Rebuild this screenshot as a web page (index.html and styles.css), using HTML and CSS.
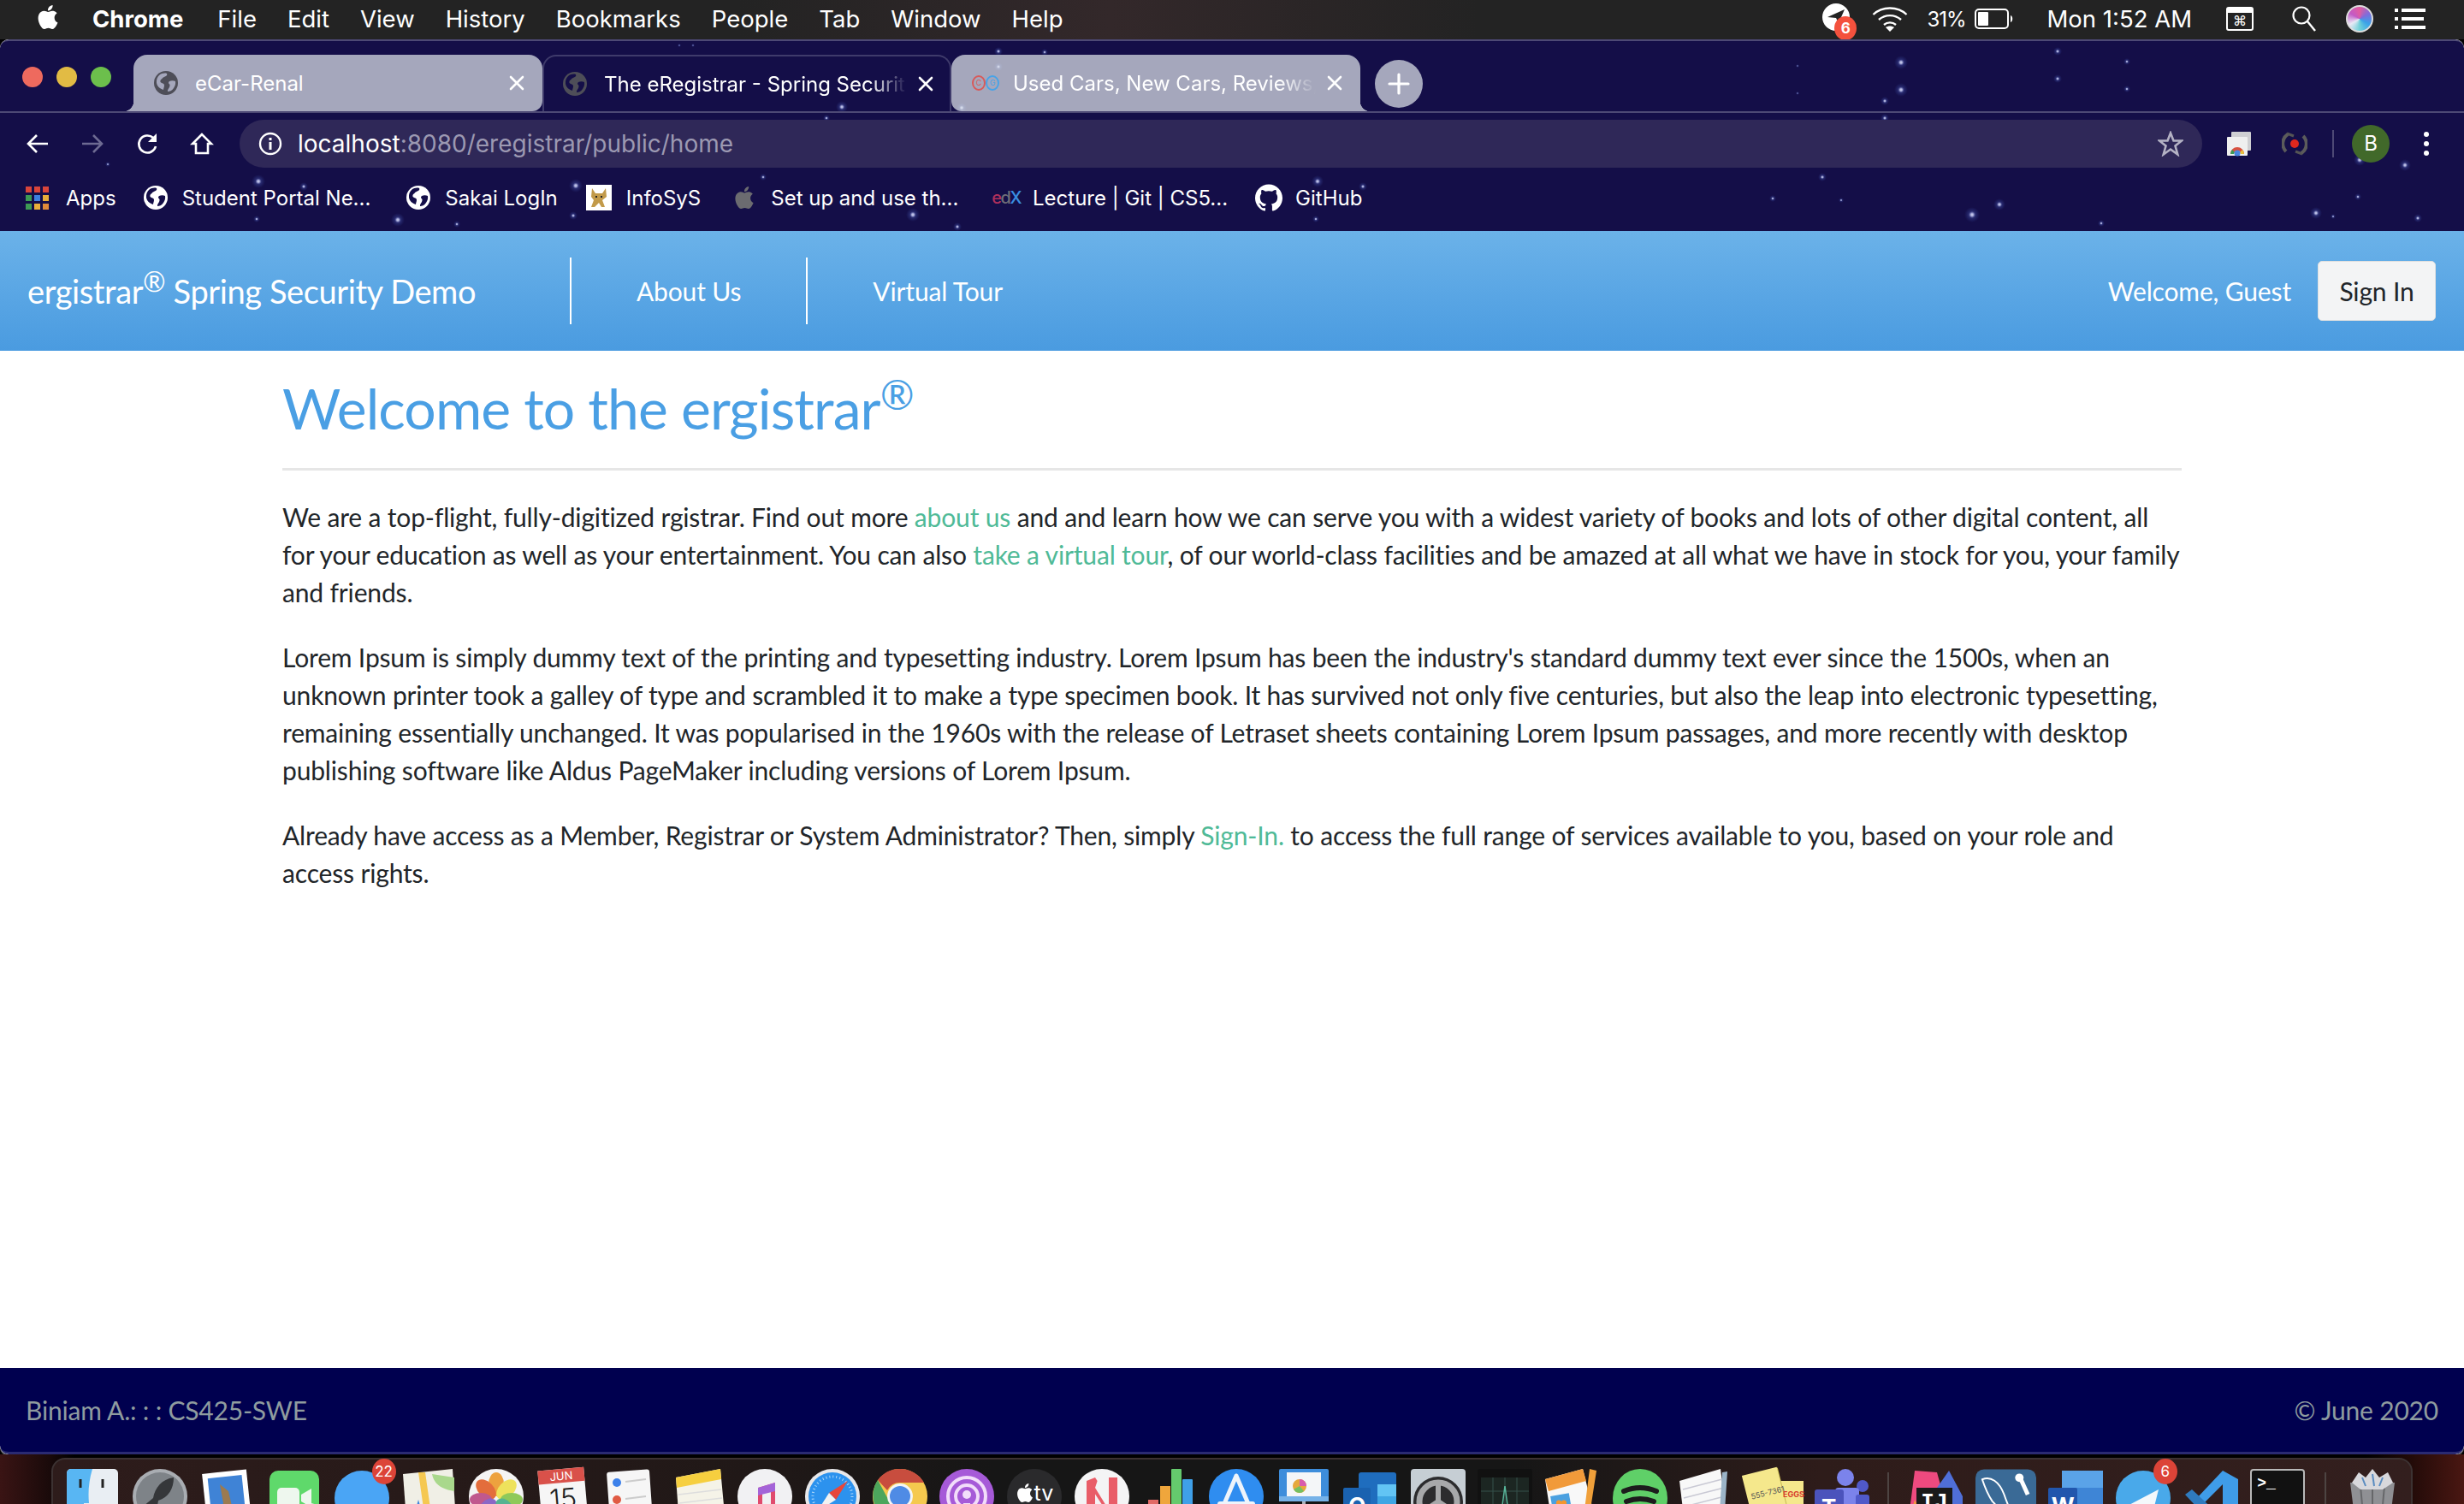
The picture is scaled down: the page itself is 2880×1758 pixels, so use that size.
FILE: index.html
```html
<!DOCTYPE html>
<html lang="en">
<head>
<meta charset="utf-8">
<title>The eRegistrar - Spring Security Demo</title>
<link rel="stylesheet" href="styles.css">
</head>
<body>
<svg class="defs" width="0" height="0" aria-hidden="true">
  <symbol id="apple" viewBox="0 0 24 24"><path fill="currentColor" d="M12.152 6.896c-.948 0-2.415-1.078-3.96-1.04-2.04.027-3.91 1.183-4.961 3.014-2.117 3.675-.546 9.103 1.519 12.09 1.013 1.454 2.208 3.09 3.792 3.039 1.52-.065 2.09-.987 3.935-.987 1.831 0 2.35.987 3.96.948 1.637-.026 2.676-1.48 3.676-2.948 1.156-1.688 1.636-3.325 1.662-3.415-.039-.013-3.182-1.221-3.22-4.857-.026-3.04 2.48-4.494 2.597-4.559-1.429-2.09-3.623-2.324-4.39-2.376-2-.156-3.675 1.09-4.61 1.09zM15.53 3.83c.843-1.012 1.4-2.427 1.245-3.83-1.207.052-2.662.805-3.532 1.818-.78.896-1.454 2.338-1.273 3.714 1.338.104 2.715-.688 3.559-1.701"/></symbol>
  <symbol id="globe" viewBox="0 0 28 28"><circle cx="14" cy="14" r="14" fill="currentColor"/><path class="land" d="M6 5c3-2.500 7-3 9-2 1 2-1 3-3 4-2 .6-2 2-4 3-1 2-1 3 1 4 2 .5 3 1 3 3 0 2-1 3-1 5-3-1-7-3-8-8C2.500 10 4 7 6 5zM18 12c2-1 5-1 7 0 .6 3-.6 6-2 8-2 3-5 4-7 4-.4-2 1-3 2-5 .6-2 1-3-.4-4-1-1-.6-2 .4-3z"/></symbol>
  <symbol id="close" viewBox="0 0 20 20"><path d="M3 3l14 14M17 3L3 17" stroke="currentColor" stroke-width="2.600" stroke-linecap="round"/></symbol>
  <symbol id="github" viewBox="0 0 24 24"><path fill="currentColor" d="M12 .297c-6.630 0-12 5.373-12 12 0 5.303 3.438 9.800 8.205 11.385.600.113.820-.258.820-.577 0-.285-.010-1.040-.015-2.040-3.338.724-4.042-1.610-4.042-1.610C4.422 18.070 3.633 17.700 3.633 17.700c-1.087-.744.084-.729.084-.729 1.205.084 1.838 1.236 1.838 1.236 1.070 1.835 2.809 1.305 3.495.998.108-.776.417-1.305.760-1.605-2.665-.300-5.466-1.332-5.466-5.930 0-1.310.465-2.380 1.235-3.220-.135-.303-.540-1.523.105-3.176 0 0 1.005-.322 3.300 1.230.960-.267 1.980-.399 3-.405 1.020.006 2.040.138 3 .405 2.280-1.552 3.285-1.230 3.285-1.230.645 1.653.240 2.873.120 3.176.765.840 1.230 1.910 1.230 3.220 0 4.610-2.805 5.625-5.475 5.920.420.360.810 1.096.810 2.220 0 1.606-.015 2.896-.015 3.286 0 .315.210.690.825.570C20.565 22.092 24 17.592 24 12.297c0-6.627-5.373-12-12-12"/></symbol>
</svg>

<header class="menubar">
  <div class="menu-left">
    <svg class="m-apple"><use href="#apple"/></svg>
    <span class="m-bold">Chrome</span><span>File</span><span>Edit</span><span>View</span><span>History</span><span>Bookmarks</span><span>People</span><span>Tab</span><span>Window</span><span>Help</span>
  </div>
  <div class="menu-right">
    <span class="st-badge"><svg width="32" height="32" viewBox="0 0 32 32"><circle cx="16" cy="16" r="16" fill="#fff"/><path d="M6 16l20-9-7 16-3-6z" fill="#232323"/></svg><b class="st-num">6</b></span>
    <svg class="st-wifi" width="42" height="30" viewBox="0 0 42 30"><g fill="none" stroke="#fff" stroke-width="2.400"><path d="M1.500 10C12 0 30 0 40.500 10"/><path d="M8 16c7.500-6.500 18.500-6.500 26 0"/><path d="M14 22c4-3.500 10-3.500 14 0"/></g><path d="M21 30l-5-5c3-2 7-2 10 0z" fill="#fff"/></svg>
    <span class="st-pct">31%</span>
    <svg class="st-bat" width="46" height="24" viewBox="0 0 46 24"><rect x="1" y="1" width="38" height="22" rx="4" fill="none" stroke="#fff" stroke-width="2"/><rect x="4" y="4" width="12" height="16" rx="1" fill="#fff"/><path d="M42 8c3 1 3 7 0 8z" fill="#fff"/></svg>
    <span class="st-time">Mon 1:52 AM</span>
    <span class="st-cmd"><i></i>⌘</span>
    <svg class="st-search" width="30" height="30" viewBox="0 0 30 30"><circle cx="12" cy="11" r="9.500" fill="none" stroke="#fff" stroke-width="2.200"/><path d="M19 18l9 11" stroke="#fff" stroke-width="2.400"/></svg>
    <span class="st-siri"></span>
    <svg class="st-list" width="36" height="26" viewBox="0 0 36 26"><path fill="#fff" d="M0 1h4v4H0zM8 1h28v4H8zM0 11h4v4H0zM8 11h26v4H8zM0 21h4v4H0zM8 21h28v4H8z"/></svg>
  </div>
</header>

<div class="window">
  <section class="chrome">
    <svg class="stars" width="2880" height="224" viewBox="0 46 2880 224" aria-hidden="true">
      <defs><radialGradient id="glow"><stop offset="0" stop-color="#d8dbf5"/><stop offset=".2" stop-color="#9a9ed0"/><stop offset=".45" stop-color="#3c4696" stop-opacity=".5"/><stop offset="1" stop-color="#2a3a88" stop-opacity="0"/></radialGradient></defs>
      <g fill="url(#glow)">
        <circle cx="2222" cy="73" r="8"/><circle cx="2222" cy="105" r="8"/><circle cx="2405" cy="60" r="5"/><circle cx="2405" cy="92" r="5"/><circle cx="2203" cy="118" r="5"/><circle cx="2203" cy="138" r="5"/><circle cx="2486" cy="72" r="4"/><circle cx="2486" cy="104" r="4"/><circle cx="2130" cy="207" r="5"/><circle cx="2072" cy="232" r="4"/><circle cx="2337" cy="239" r="7"/><circle cx="2305" cy="251" r="9"/><circle cx="2707" cy="249" r="7"/><circle cx="2756" cy="230" r="4"/><circle cx="2811" cy="193" r="7"/><circle cx="2758" cy="187" r="7"/><circle cx="2826" cy="255" r="5"/><circle cx="2456" cy="261" r="4"/><circle cx="2727" cy="253" r="3"/><circle cx="2152" cy="234" r="3"/><circle cx="2101" cy="77" r="2"/><circle cx="2101" cy="109" r="2"/>
        <circle cx="302" cy="212" r="8"/><circle cx="355" cy="218" r="5"/><circle cx="673" cy="217" r="8"/><circle cx="465" cy="257" r="8"/><circle cx="300" cy="256" r="4"/><circle cx="670" cy="252" r="5"/><circle cx="534" cy="262" r="4"/><circle cx="984" cy="125" r="7"/><circle cx="966" cy="138" r="4"/><circle cx="794" cy="53" r="2"/><circle cx="810" cy="53" r="2"/><circle cx="126" cy="192" r="3"/><circle cx="892" cy="207" r="4"/>
        <circle cx="1167" cy="60" r="5"/><circle cx="1221" cy="61" r="4"/><circle cx="1167" cy="78" r="5"/><circle cx="1124" cy="126" r="6"/><circle cx="1540" cy="212" r="7"/><circle cx="1593" cy="218" r="5"/><circle cx="1067" cy="251" r="8"/><circle cx="1119" cy="265" r="5"/><circle cx="1538" cy="256" r="4"/>
      </g>
    </svg>

    <div class="tabstrip">
      <div class="lights"><i class="l-red"></i><i class="l-yellow"></i><i class="l-green"></i></div>
      <div class="tab tab-light tab-first">
        <svg class="tab-ico ico-dark"><use href="#globe"/></svg>
        <span class="tab-title">eCar-Renal</span>
        <svg class="tab-x"><use href="#close"/></svg>
      </div>
      <div class="tab tab-active">
        <svg class="tab-ico ico-dark"><use href="#globe"/></svg>
        <span class="tab-title tab-fade">The eRegistrar - Spring Security Demo</span>
        <svg class="tab-x"><use href="#close"/></svg>
      </div>
      <div class="tab tab-light tab-last">
        <span class="cg-ico"><b>C</b><b>G</b></span>
        <span class="tab-title tab-fade">Used Cars, New Cars, Reviews, Photos</span>
        <svg class="tab-x"><use href="#close"/></svg>
      </div>
      <div class="newtab"><svg width="28" height="28" viewBox="0 0 28 28"><path d="M14 3v22M3 14h22" stroke="#fff" stroke-width="3.200" stroke-linecap="round"/></svg></div>
    </div>

    <div class="toolbar">
      <svg class="tb-btn" viewBox="0 0 28 28"><path d="M26 14H4M13 4L3 14l10 10" fill="none" stroke="#fff" stroke-width="2.600"/></svg>
      <svg class="tb-btn" viewBox="0 0 28 28"><path d="M2 14h22M15 4l10 10-10 10" fill="none" stroke="#6d6a92" stroke-width="2.600"/></svg>
      <svg class="tb-btn" viewBox="0 0 28 28"><path d="M23 17a10 10 0 1 1-3-10" fill="none" stroke="#fff" stroke-width="2.600"/><path d="M24 2v10H14z" fill="#fff"/></svg>
      <svg class="tb-btn" viewBox="0 0 28 28"><path d="M14 3L3 14h4v11h14V14h4z" fill="none" stroke="#fff" stroke-width="2.600"/></svg>
      <div class="omnibox">
        <svg class="omni-info" width="28" height="28" viewBox="0 0 28 28"><circle cx="14" cy="14" r="12" fill="none" stroke="#fff" stroke-width="2.400"/><path d="M12.500 7h3v3h-3zM12.500 12h3v9h-3z" fill="#fff"/></svg>
        <span class="omni-url"><span class="omni-host">localhost</span>:8080/eregistrar/public/home</span>
        <svg class="omni-star" width="30" height="30" viewBox="0 0 30 30"><path d="M15 2.500l3.500 9h9.500l-7.500 6 2.800 10L15 21.500 6.700 27.500l2.800-10-7.500-6h9.500z" fill="none" stroke="#b4b2c4" stroke-width="2.600"/></svg>
      </div>
      <div class="tb-ext">
        <svg width="30" height="30" viewBox="0 0 30 30"><rect x="6" y="1" width="23" height="22" rx="1" fill="#cfcfd2"/><rect x="1" y="7" width="24" height="22" rx="1" fill="#efefef"/><path d="M5 27a8 8 0 0 1 16 0h-4a4 4 0 0 0-8 0z" fill="#d8503f"/><path d="M5 27a8 8 0 0 1 2-5l3 3-1 2z" fill="#3b9c55"/><path d="M21 27a8 8 0 0 0-2-5l-3 3 1 2z" fill="#eac13d"/><circle cx="13" cy="26" r="3.500" fill="#4a86e0"/></svg>
        <svg width="30" height="32" viewBox="0 0 30 32"><path d="M6 4l8 3M24 28l-8-3" stroke="#555" stroke-width="3"/><path d="M5 25A13 13 0 0 1 7 5M25 7a13 13 0 0 1-2 20" fill="none" stroke="#5b5b5b" stroke-width="4"/><circle cx="15" cy="16" r="5" fill="#e0281e"/></svg>
      </div>
      <i class="tb-sep"></i>
      <span class="avatar">B</span>
      <span class="kebab"><i></i><i></i><i></i></span>
    </div>

    <nav class="bookmarks">
      <span class="bm bm-apps"><span class="grid9"><i></i><i></i><i></i><i></i><i></i><i></i><i></i><i></i><i></i></span>Apps</span>
      <span class="bm bm-student"><svg class="bm-ico"><use href="#globe"/></svg>Student Portal Ne...</span>
      <span class="bm bm-sakai"><svg class="bm-ico"><use href="#globe"/></svg>Sakai LogIn</span>
      <span class="bm bm-info"><svg class="bm-tom" viewBox="0 0 30 30"><rect width="30" height="30" fill="#fff"/><path d="M7 4l4 6h8l4-6 1 10-5 4 3 8h-4l-3-5-5 5H6l3-8-3-4z" fill="#c29a4a"/><path d="M11 13h2v2h-2zM17 13h2v2h-2z" fill="#222"/></svg>InfoSyS</span>
      <span class="bm bm-setup"><svg class="bm-appl"><use href="#apple"/></svg>Set up and use th...</span>
      <span class="bm bm-edx"><span class="edx"><b class="e1">e</b><b class="e2">d</b><b class="e3">X</b></span>Lecture | Git | CS5...</span>
      <span class="bm bm-gh"><svg class="bm-ico bm-octo"><use href="#github"/></svg>GitHub</span>
    </nav>
  </section>

  <nav class="navbar">
    <a class="brand">ergistrar<sup>®</sup> Spring Security Demo</a>
    <a class="navlink navlink-first">About Us</a>
    <a class="navlink">Virtual Tour</a>
    <span class="welcome">Welcome, Guest</span>
    <button class="signin">Sign In</button>
  </nav>

  <main class="content">
    <h1 class="title">Welcome to the ergistrar<sup>®</sup></h1>
    <hr class="rule">
    <p>We are a top-flight, fully-digitized rgistrar. Find out more <a>about us</a> and and learn how we can serve you with a widest variety of books and lots of other digital content, all<br>for your education as well as your entertainment. You can also <a>take a virtual tour</a>, of our world-class facilities and be amazed at all what we have in stock for you, your family and friends.</p>
    <p>Lorem Ipsum is simply dummy text of the printing and typesetting industry. Lorem Ipsum has been the industry's standard dummy text ever since the 1500s, when an unknown printer took a galley of type and scrambled it to make a type specimen book. It has survived not only five centuries, but also the leap into electronic typesetting, remaining essentially unchanged. It was popularised in the 1960s with the release of Letraset sheets containing Lorem Ipsum passages, and more recently with desktop publishing software like Aldus PageMaker including versions of Lorem Ipsum.</p>
    <p>Already have access as a Member, Registrar or System Administrator? Then, simply <a>Sign-In.</a> to access the full range of services available to you, based on your role and access rights.</p>
  </main>

  <footer class="footer">
    <span>Biniam A.: : : CS425-SWE</span>
    <span>© June 2020</span>
  </footer>
</div>

<div class="desktop">
  <div class="dock">
    <svg class="di" viewBox="0 0 64 64"><rect x="2" width="60" height="64" rx="5" fill="#e9eef3"/><path d="M2 5a5 5 0 0 1 5-5h25q-6 20-4 40h-6v24H7a5 5 0 0 1-5-5z" fill="#58b6f3"/><path d="M18 12v10M44 12v10" stroke="#222" stroke-width="3"/></svg>
    <svg class="di" viewBox="0 0 64 64"><circle cx="32" cy="32" r="32" fill="#a9adb2"/><circle cx="32" cy="32" r="28" fill="#7e8388"/><path d="M48 10c-14 2-22 12-24 24l-12 10 10-1 6 6 2-12c12-4 18-14 18-27z" fill="#35373a"/></svg>
    <svg class="di" viewBox="0 0 64 64"><rect x="6" y="3" width="52" height="61" fill="#fff" transform="rotate(-6 32 32)"/><rect x="12" y="9" width="40" height="50" fill="#3f83d6" transform="rotate(-6 32 32)"/><path d="M24 18l10 8 6 26-18 8 6-20z" fill="#9b7a50"/></svg>
    <svg class="di" viewBox="0 0 64 64"><rect x="3" y="2" width="58" height="62" rx="10" fill="#5fd96b"/><rect x="12" y="22" width="26" height="24" rx="5" fill="#eef7ee"/><path d="M40 30l12-7v22l-12-7z" fill="#eef7ee"/><circle cx="50" cy="54" r="14" fill="#f2f2f2"/><circle cx="50" cy="52" r="5" fill="#3fc85a"/></svg>
    <span class="di di-badged"><svg class="di" viewBox="0 0 64 64"><circle cx="32" cy="34" r="32" fill="#4aa5f5"/><ellipse cx="44" cy="62" rx="18" ry="14" fill="#f2f4f6"/></svg><b class="badge">22</b></span>
    <svg class="di" viewBox="0 0 64 64"><path d="M2 6L60 0l4 60H6z" fill="#f0efe6"/><path d="M36 6c2 12 12 18 26 20V10z" fill="#a9d88c"/><path d="M20 4l8 56h8L28 4z" fill="#f5c851"/><circle cx="50" cy="58" r="16" fill="#f4f4f4"/><path d="M50 46l-4 10h8z" fill="#e04c3a"/><path d="M20 36l-7 24h14z" fill="#3e84dd"/></svg>
    <svg class="di" viewBox="0 0 64 64"><circle cx="32" cy="32" r="32" fill="#f4f4f4"/><g><ellipse cx="32" cy="18" rx="9" ry="14" fill="#eda23e"/><ellipse cx="20" cy="24" rx="9" ry="14" fill="#e36d3c" transform="rotate(-45 20 24)"/><ellipse cx="44" cy="24" rx="9" ry="14" fill="#eee25c" transform="rotate(45 44 24)"/><ellipse cx="14" cy="36" rx="13" ry="8" fill="#c0588e"/><ellipse cx="50" cy="36" rx="13" ry="8" fill="#8ec95a"/><ellipse cx="22" cy="46" rx="9" ry="13" fill="#8a67c6" transform="rotate(40 22 46)"/><ellipse cx="42" cy="46" rx="9" ry="13" fill="#55b392" transform="rotate(-40 42 46)"/></g></svg>
    <span class="di di-cal"><span class="cal-m">JUN</span><span class="cal-d">15</span></span>
    <svg class="di" viewBox="0 0 64 64"><rect x="6" y="2" width="50" height="62" rx="3" fill="#f6f6f6" transform="rotate(-4 32 32)"/><circle cx="16" cy="16" r="5" fill="#3d81ea"/><circle cx="16" cy="36" r="5" fill="#e05a43"/><circle cx="17" cy="56" r="5" fill="#efa23a"/><path d="M26 15l24-3M26 35l24-3M26 55l24-3" stroke="#ccc" stroke-width="2"/></svg>
    <svg class="di" viewBox="0 0 64 64"><path d="M6 10L58 0l6 64H10z" fill="#f5f3e8"/><path d="M6 10L58 0l1 12L7 22z" fill="#f6cf3f"/><path d="M9 30l50-6M10 40l50-6M11 50l50-6M12 60l50-6" stroke="#ddd" stroke-width="1.500"/></svg>
    <svg class="di" viewBox="0 0 64 64"><circle cx="32" cy="32" r="32" fill="#f1f1f3"/><path d="M24 22l20-6v28h-5V24l-10 3v24h-5z" fill="#e04a6d"/><path d="M24 22l20-6v10l-20 5z" fill="#a464d8"/></svg>
    <svg class="di" viewBox="0 0 64 64"><circle cx="32" cy="32" r="32" fill="#e8e8ea"/><circle cx="32" cy="32" r="28" fill="#2c92ee"/><circle cx="32" cy="32" r="23" fill="none" stroke="#a9d6fb" stroke-width="3" stroke-dasharray="1 3"/><path d="M50 14L28 28l8 8z" fill="#e8463a"/><path d="M14 50l22-14-8-8z" fill="#f2f2f2"/></svg>
    <svg class="di" viewBox="0 0 64 64"><circle cx="32" cy="32" r="32" fill="#f5c94e"/><path d="M32 0a32 32 0 0 1 28 16H32a16 16 0 0 0-15 9L6 13A32 32 0 0 1 32 0z" fill="#c84d3e"/><path d="M6 13l14 26 10 24A32 32 0 0 1 6 13z" fill="#4ca65c"/><circle cx="32" cy="32" r="15" fill="#f5f5f5"/><circle cx="32" cy="32" r="12" fill="#4f8be5"/></svg>
    <svg class="di" viewBox="0 0 64 64"><circle cx="32" cy="32" r="32" fill="#a65ad8"/><g fill="none" stroke="#f2ddfa" stroke-width="4"><circle cx="32" cy="32" r="22"/><circle cx="32" cy="32" r="13"/></g><circle cx="32" cy="30" r="5" fill="#f2ddfa"/><path d="M26 64l2-24h8l2 24z" fill="#f2ddfa"/></svg>
    <span class="di di-tv"><svg viewBox="0 0 24 24"><use href="#apple"/></svg>tv</span>
    <svg class="di" viewBox="0 0 64 64"><circle cx="32" cy="32" r="32" fill="#f4f4f5"/><path d="M14 14l10-4 26 40-10 4z" fill="#e95d68"/><path d="M14 14h10v40H14zM40 10h10v40H40z" fill="#e95d68"/><path d="M24 22l16 26v-20L28 10z" fill="#f4f4f5"/></svg>
    <svg class="di" viewBox="0 0 64 64"><rect x="0" y="46" width="60" height="18" fill="#ececec"/><rect x="8" y="36" width="12" height="28" fill="#e26a66"/><rect x="22" y="20" width="12" height="44" fill="#efa63c"/><rect x="35" y="0" width="12" height="64" rx="1" fill="#65ca6d"/><rect x="48" y="12" width="12" height="52" rx="1" fill="#3fa0e8"/></svg>
    <svg class="di" viewBox="0 0 64 64"><circle cx="32" cy="32" r="32" fill="#2f8df0"/><g fill="none" stroke="#eef4fb" stroke-width="5" stroke-linecap="round"><path d="M32 8L14 50M32 8l18 42"/></g><rect x="10" y="38" width="44" height="8" rx="3" fill="#eef4fb"/></svg>
    <svg class="di" viewBox="0 0 64 64"><rect x="3" y="0" width="58" height="36" rx="2" fill="#3d8ddb"/><rect x="3" y="32" width="58" height="6" fill="#76b2e8"/><rect x="30" y="38" width="4" height="26" fill="#aab3bb"/><rect x="12" y="4" width="40" height="28" fill="#f4f6f8"/><circle cx="27" cy="20" r="8" fill="#e5a83d"/><path d="M27 20V12a8 8 0 0 1 8 8z" fill="#d85bae"/><path d="M27 20l-7 4a8 8 0 0 0 12 2z" fill="#74c062"/></svg>
    <span class="di di-out"><svg viewBox="0 0 64 64"><rect x="18" y="4" width="44" height="60" rx="3" fill="#1f6dbe"/><rect x="40" y="18" width="22" height="46" fill="#3ea6e4"/><rect x="40" y="18" width="22" height="14" fill="#62c4f4"/><rect x="0" y="22" width="32" height="42" rx="2" fill="#1a62b0"/></svg><b class="oc">O</b></span>
    <svg class="di" viewBox="0 0 64 64"><rect x="0" y="0" width="64" height="64" rx="4" fill="#c6ced4"/><circle cx="32" cy="38" r="29" fill="#2c2c2e"/><circle cx="32" cy="38" r="22" fill="none" stroke="#a7a8aa" stroke-width="7"/><path d="M32 38V18M32 38L14 50M32 38l18 12" stroke="#a7a8aa" stroke-width="6"/></svg>
    <svg class="di" viewBox="0 0 64 64"><rect x="0" y="0" width="64" height="64" rx="3" fill="#111"/><rect x="4" y="10" width="56" height="54" fill="#1c2622"/><path d="M4 26h56M4 42h56M18 10v54M32 10v54M46 10v54" stroke="#34504a"/><path d="M4 46h20l4 4 4-30 4 30 6-8 6 8 6-4h6" fill="none" stroke="#58b59a" stroke-width="1.500"/></svg>
    <svg class="di" viewBox="0 0 64 64"><path d="M0 12L44 0l16 64H8z" fill="#f8f8f8"/><path d="M0 12L44 0l4 14L4 26z" fill="#f19a3a"/><rect x="8" y="30" width="22" height="24" fill="#4aa0e0" transform="rotate(-10 19 42)"/><path d="M19 38c3-3 7-1 6 3l-6 9-6-9c-1-4 3-6 6-3z" fill="#f4962d"/><path d="M52 0l8 2-10 64-6-2z" fill="#f0a03a"/></svg>
    <svg class="di" viewBox="0 0 64 64"><ellipse cx="32" cy="34" rx="32" ry="34" fill="#5fd068"/><g fill="none" stroke="#1d1d1d" stroke-width="6" stroke-linecap="round"><path d="M13 26q19-8 38 0"/><path d="M16 38q16-6 32 0"/><path d="M19 50q13-5 26 0"/></g></svg>
    <svg class="di" viewBox="0 0 64 64"><path d="M0 14L48 0l8 64H6z" fill="#f8f8f8"/><path d="M4 24l46-12M5 34l47-12M6 44l47-12M7 54l47-12" stroke="#c9c9d4" stroke-width="1.500"/><path d="M50 4l6-1-4 61h-6z" fill="#9bb4c8"/></svg>
    <span class="di di-sticky"><i class="st-b"></i><i class="st-a"></i><span class="st-t">555-7361</span><span class="st-e">EGGS</span></span>
    <span class="di di-teams"><svg viewBox="0 0 64 64"><circle cx="36" cy="10" r="10" fill="#7b83eb"/><circle cx="56" cy="20" r="7" fill="#5059c9"/><rect x="24" y="22" width="28" height="42" rx="4" fill="#7b83eb"/><rect x="48" y="30" width="16" height="34" rx="3" fill="#5059c9"/><rect x="0" y="24" width="34" height="40" rx="3" fill="#4b53bc"/></svg><b class="tc">T</b></span>
    <i class="dock-sep"></i>
    <span class="di di-ij"><svg viewBox="0 0 64 64"><path d="M8 2l26 2 6 22-30 38H0z" fill="#ee4a7f"/><path d="M34 22L48 2l16 30v32H34z" fill="#4f6fd8"/><path d="M0 64l8-28 14 28z" fill="#f29a3d"/><rect x="10" y="22" width="42" height="42" fill="#1a1a1a"/></svg><b class="ij-t">IJ</b></span>
    <svg class="di di-wide" viewBox="0 0 72 64"><rect x="0" y="0" width="72" height="64" rx="10" fill="#3a6a96"/><path d="M8 12c10-4 20 2 26 18 4 12 8 20 14 34H36c-4-12-10-20-16-26-4-6-8-14-12-26z" fill="none" stroke="#fff" stroke-width="2"/><path d="M52 8l10 22" stroke="#fff" stroke-width="5"/><circle cx="52" cy="10" r="5" fill="#fff"/></svg>
    <span class="di di-word"><svg viewBox="0 0 64 64"><rect x="16" y="2" width="48" height="62" rx="3" fill="#2b6cc4"/><rect x="16" y="2" width="48" height="20" fill="#5aa3e8"/><rect x="16" y="22" width="48" height="20" fill="#3e85d6"/><rect x="0" y="22" width="34" height="42" rx="2" fill="#2156ad"/></svg><b class="wc">W</b></span>
    <span class="di di-badged"><svg class="di" viewBox="0 0 64 64"><circle cx="32" cy="34" r="32" fill="#49a9ea"/><path d="M8 46l42-22-10 40-10-12-6 6-4-8z" fill="#f4f8fb"/></svg><b class="badge">6</b></span>
    <svg class="di" viewBox="0 0 64 64"><path d="M46 2l18 10v52H46V18L22 42l-8-6z" fill="#3f9ce8"/><path d="M2 30l8-6 30 28-6 12z" fill="#2f7bbf"/></svg>
    <span class="di di-term"><b class="term-p">&gt;_</b></span>
    <i class="dock-sep dock-sep-2"></i>
    <svg class="di di-trash" viewBox="0 0 56 64"><path d="M2 16h52l-6 48H8z" fill="#8f9094"/><path d="M14 20l4 44M28 20v44M42 20l-4 44" stroke="#66676a" stroke-width="2"/><path d="M4 16l8-12 8 6 8-10 8 10 10-6 6 12-12 8H14z" fill="#d8d8dc"/><path d="M16 10l4 10M28 6l2 14M40 10l-4 10" stroke="#5a8cc0" stroke-width="2"/></svg>
  </div>
</div>
</body>
</html>
```
FILE: styles.css
```css
* { box-sizing: border-box; }
html, body { margin: 0; padding: 0; height: 100%; }
body {
  width: 2880px;
  height: 1758px;
  overflow: hidden;
  display: flex;
  flex-direction: column;
  background: #000;
  font-family: "Lato", "Open Sans", sans-serif;
}
.defs { position: absolute; }
.land { fill: var(--land, #140e48); }

/* macOS menu bar */
.menubar {
  height: 46px;
  flex: none;
  background: linear-gradient(90deg, #232323 0, #232323 30%, #33282a 45%, #232323 60%);
  color: #fff;
  font: 400 27.5px "Inter", "Liberation Sans", sans-serif;
  display: flex;
  justify-content: space-between;
  align-items: center;
  padding: 0 45px 2px 42px;
}
.menu-left { display: flex; align-items: center; gap: 36px; }
.m-apple { width: 28px; height: 32px; color: #fff; margin-right: 2px; margin-bottom: 4px; }
.m-bold { font-weight: 700; margin-right: 4px; }
.menu-right { display: flex; align-items: center; }
.st-badge { position: relative; width: 36px; height: 36px; display: block; }
.st-num {
  position: absolute; right: -4px; bottom: -7px; width: 26px; height: 28px; border-radius: 50%;
  background: #f4513d; font: 700 17px/28px "Inter", sans-serif; text-align: center;
}
.st-wifi { margin-left: 22px; }
.st-pct { margin-left: 22px; font-size: 24px; letter-spacing: -1px; }
.st-bat { margin-left: 10px; }
.st-time { margin-left: 39px; }
.st-cmd {
  margin-left: 40px; width: 32px; height: 28px; border: 2px solid #fff; border-radius: 3px; background: #232323;
  font-size: 16px; line-height: 24px; text-align: center; position: relative; display: block; padding-top: 2px;
}
.st-cmd i { position: absolute; left: 0; right: 0; top: 0; height: 5px; background: #fff; }
.st-search { margin-left: 44px; }
.st-siri {
  margin-left: 34px; width: 32px; height: 32px; border-radius: 50%; border: 2px solid #ddd;
  background: conic-gradient(#e25ca0, #7f6cdb, #3aa2e8, #6fd0d8, #e9e9f5, #c25ac6, #e25ca0);
}
.st-list { margin-left: 25px; }

/* Browser window */
.window {
  flex: none;
  height: 1654px;
  display: flex;
  flex-direction: column;
  background: #fff;
  border-radius: 10px;
  overflow: hidden;
  box-shadow: 0 2px 0 #5a5a62;
}

/* Chrome frame */
.chrome {
  flex: none;
  height: 224px;
  background: #140e48;
  border-top: 2px solid #4d4975;
  position: relative;
  color: #fff;
  font: 400 24px "Inter", "Liberation Sans", sans-serif;
  border-radius: 10px 10px 0 0;
}
.stars { position: absolute; left: 0; top: -2px; pointer-events: none; }

.tabstrip {
  height: 84px;
  padding: 16px 0 0 156px;
  border-bottom: 2px solid #4d4975;
  display: flex;
  position: relative;
}
.lights { position: absolute; left: 26px; top: 30px; display: flex; gap: 16px; }
.lights i { width: 24px; height: 24px; border-radius: 50%; display: block; }
.l-red { background: #ee6a5e; }
.l-yellow { background: #e2bb44; }
.l-green { background: #6cbf4c; }

.tab {
  width: 478px;
  height: 66px;
  padding: 0 20px 0 24px;
  display: flex;
  align-items: center;
  position: relative;
  flex: none;
}
.tab-light { background: rgba(227, 232, 238, .7); --land: #a5a7bc; }
.tab-first { border-radius: 16px 16px 12px 0; }
.tab-last { border-radius: 16px 16px 0 12px; }
.tab-first::before, .tab-last::after {
  content: "";
  position: absolute;
  bottom: 0;
  width: 12px;
  height: 12px;
}
.tab-first::before { left: -12px; background: radial-gradient(circle at 0 0, transparent 12px, rgba(227, 232, 238, .7) 12.5px); }
.tab-last::after { right: -12px; background: radial-gradient(circle at 100% 0, transparent 12px, rgba(227, 232, 238, .7) 12.5px); }
.tab-active {
  border: 2px solid #3f3b6b;
  border-bottom: 0;
  border-radius: 16px 16px 0 0;
  padding-left: 22px;
  padding-right: 18px;
}
.tab-ico { width: 28px; height: 28px; flex: none; margin-right: 20px; }
.ico-dark { color: #4e4e58; }
.cg-ico { width: 32px; margin-right: 16px; flex: none; display: flex; }
.cg-ico b {
  width: 16px; height: 18px; border: 2px solid currentColor; border-radius: 50%;
  font: 400 9px/14px "Inter", sans-serif; text-align: center; display: block;
}
.cg-ico b:first-child { color: #d85a5a; }
.cg-ico b:last-child { color: #47a3e8; }
.tab-title { flex: 1; white-space: nowrap; overflow: hidden; }
.tab-fade { -webkit-mask-image: linear-gradient(90deg, #000 88%, transparent 100%); mask-image: linear-gradient(90deg, #000 88%, transparent 100%); }
.tab-x { width: 20px; height: 20px; flex: none; margin-left: 12px; color: #fff; }
.newtab {
  width: 56px; height: 56px; border-radius: 50%;
  margin: 6px 0 0 17px;
  background: rgba(227, 232, 238, .7);
  display: flex; align-items: center; justify-content: center;
}

.toolbar {
  height: 64px;
  padding: 8px 20px 0 30px;
  display: flex;
  align-items: center;
  position: relative;
}
.tb-btn { width: 28px; height: 28px; flex: none; margin-right: 36px; }
.tb-btn:nth-child(3) { margin-left: 1px; margin-right: 35px; }
.tb-btn:nth-child(4) { margin-right: 30px; }
.omnibox {
  width: 2294px;
  height: 56px;
  flex: none;
  border-radius: 28px;
  background: #2f2858;
  display: flex;
  align-items: center;
  padding: 0 22px 0 22px;
  font-size: 28px;
  color: #9c99b2;
}
.omni-info { flex: none; }
.omni-url { margin-left: 18px; flex: 1; }
.omni-host { color: #fff; }
.tb-ext { display: flex; align-items: center; gap: 35px; margin-left: 28px; }
.tb-sep { width: 2px; height: 32px; background: #4d4975; margin-left: 29px; display: block; }
.avatar {
  width: 44px; height: 44px; border-radius: 50%; background: #41692a; margin-left: 21px;
  font-size: 24px; line-height: 44px; text-align: center;
}
.kebab { display: flex; flex-direction: column; gap: 5px; margin-left: 40px; }
.kebab i { width: 6px; height: 6px; border-radius: 50%; background: #fff; display: block; }

.bookmarks {
  height: 74px;
  position: relative;
  display: flex;
  align-items: center;
  padding: 0 0 4px 30px;
}
.bm { display: flex; align-items: center; white-space: nowrap; }
.grid9 { display: grid; grid-template-columns: repeat(3, 7px); gap: 3px; margin-right: 20px; }
.grid9 i { height: 7px; display: block; background: #d9453b; }
.grid9 i:nth-child(4) { background: #3d9a54; }
.grid9 i:nth-child(5) { background: #3d7fe0; }
.grid9 i:nth-child(6) { background: #e8ae3a; }
.grid9 i:nth-child(7) { background: #3d9a54; }
.grid9 i:nth-child(8) { background: #e8ae3a; }
.grid9 i:nth-child(9) { background: #e08a3a; }
.bm-ico { width: 28px; height: 30px; color: #fff; margin-right: 17px; flex: none; }
.bm-octo { width: 32px; height: 32px; margin-right: 15px; margin-left: -2px; }
.bm-tom { width: 30px; height: 30px; margin-right: 17px; flex: none; }
.bm-appl { width: 26px; height: 30px; color: #6b6b70; margin-right: 18px; flex: none; }
.bm-student { margin-left: 32px; }
.bm-sakai { margin-left: 42px; }
.bm-info { margin-left: 33px; }
.bm-setup { margin-left: 38px; }
.bm-edx { margin-left: 39px; }
.bm-gh { margin-left: 34px; }
.edx { display: flex; margin-right: 14px; letter-spacing: -1.500px; font-size: 20px; }
.edx b { font-weight: 500; }
.e1 { color: #b0305c; }
.e2 { color: #6f6f78; }
.e3 { color: #3a8ee0; }

/* App navbar */
.navbar {
  flex: none;
  height: 140px;
  background: linear-gradient(180deg, #6bb2e9, #4a9be0);
  color: #fff;
  display: flex;
  align-items: center;
  padding: 0 33px 0 32px;
  font-size: 30px;
  letter-spacing: -.15px;
}
.brand { width: 634px; white-space: nowrap; font-size: 38px; letter-spacing: -.4px; }
.brand sup { font-size: 32px; line-height: 0; }
.navlink { height: 78px; padding: 0 76px; line-height: 78px; border-left: 2px solid #fff; white-space: nowrap; }
.welcome { margin-left: auto; }
.signin {
  margin-left: 31px;
  width: 138px;
  height: 70px;
  font: inherit;
  letter-spacing: inherit;
  color: #212529;
  background: #f3f4f5;
  border: 1px solid #e0e0e0;
  border-radius: 5px;
  padding: 0;
}

/* Main content */
.content {
  flex: 1;
  padding: 0 330px;
  color: #212529;
  font-size: 30px;
  line-height: 44px;
  letter-spacing: -.16px;
}
.title {
  margin: 0;
  padding-top: 27px;
  font-weight: 400;
  font-size: 66px;
  line-height: 80px;
  letter-spacing: -.9px;
  color: #4a9fe4;
  height: 104px;
}
.title sup { font-size: 48px; line-height: 0; }
.rule { margin: 33px 0 0; height: 3px; border: 0; background: #e6e6e6; }
.content p { margin: 32px 0 0; }
.content a { color: #4fba97; }

/* Footer */
.footer {
  flex: none;
  height: 101px;
  background: #00004f;
  border-bottom: 3px solid #2a2a72;
  color: #8f9c9f;
  font-size: 30px;
  letter-spacing: -.2px;
  display: flex;
  justify-content: space-between;
  align-items: center;
  padding: 0 30px 0 30px;
  border-radius: 0 0 10px 10px;
}

/* Desktop + Dock */
.desktop {
  flex: 1;
  min-height: 0;
  background: linear-gradient(90deg, #3a1414 0, #1a0a0a 2%, #000 3%, #000 96%, #4a1712 100%);
  padding: 4px 0 0 60px;
  overflow: hidden;
}
.dock {
  width: 2760px;
  height: 80px;
  background: linear-gradient(90deg, #2e1c1b 0, #201817 30%, #161616 40%, #161616 62%, #2e1c1a 75%, #331f1e 100%);
  border: 2px solid #3c3232;
  border-radius: 16px 16px 0 0;
  padding: 11px 10px 0 14px;
  display: flex;
  align-items: flex-start;
  gap: 14.65px;
  color: #fff;
}
.di {
  width: 64px;
  height: 64px;
  flex: none;
  display: block;
  position: relative;
  font-family: "Inter", sans-serif;
}
.di svg { width: 100%; height: 100%; display: block; }
.di-wide { width: 71px; }
.badge {
  position: absolute; right: -8px; top: -12px; width: 28px; height: 30px; border-radius: 50%;
  background: #dc4438; font: 400 17px/30px "Inter", sans-serif; text-align: center; color: #fff;
}
.di-cal { background: #f6f6f6; transform: rotate(-5deg); width: 54px; margin: 0 5px; }
.cal-m { display: block; background: #d9514a; color: #fff; font-size: 13px; line-height: 16px; text-align: center; }
.cal-d { display: block; color: #222; font-size: 32px; line-height: 38px; text-align: center; font-weight: 300; }
.di-tv { background: #2a2a2c; border-radius: 50%; font-size: 25px; line-height: 28px; display: flex; justify-content: center; align-items: flex-start; padding-top: 14px; }
.di-tv svg { width: 22px; height: 28px; color: #fff; }
.oc, .wc, .tc {
  position: absolute; color: #fff; font: 700 26px/30px "Inter", sans-serif; text-align: center;
}
.oc { left: 0; width: 32px; top: 28px; }
.wc { left: 0; width: 34px; top: 28px; }
.tc { left: 0; width: 34px; top: 30px; }
.st-a { position: absolute; left: 0; top: 2px; width: 42px; height: 56px; background: #f5e88c; transform: rotate(-14deg); box-shadow: 1px 1px 0 #c9bb58; }
.st-b { position: absolute; left: 36px; top: 14px; width: 30px; height: 52px; background: #f5e88c; }
.st-t { position: absolute; left: 4px; top: 22px; font-size: 9px; color: #555; transform: rotate(-14deg); white-space: nowrap; }
.st-e { position: absolute; left: 42px; top: 24px; font-size: 9px; color: #d8402e; font-weight: 700; }
.dock-sep { width: 2px; height: 50px; background: #4d4442; flex: none; display: block; margin: 4px 7px 0 7px; }
.dock-sep-2 { margin-left: 8px; margin-right: 8px; }
.ij-t { position: absolute; left: 10px; width: 42px; top: 24px; font: 700 26px/30px "Liberation Mono", monospace; text-align: center; color: #fff; }
.di-term { background: #111; border: 2px solid #b8b8b8; border-radius: 4px; }
.term-p { position: absolute; left: 6px; top: 4px; font: 700 18px/22px "Liberation Mono", monospace; color: #fff; }
.di-trash { width: 56px; margin-left: 4px; }
```
